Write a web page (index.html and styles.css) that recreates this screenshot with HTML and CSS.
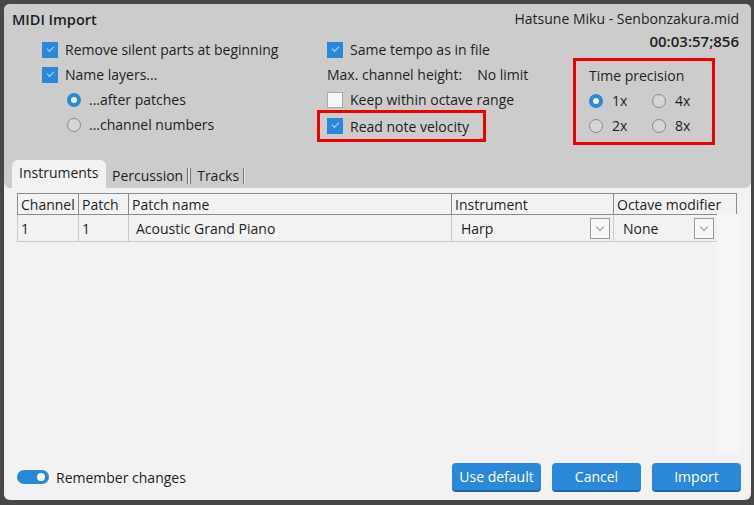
FILE: index.html
```html
<!DOCTYPE html>
<html lang="en">
<head>
    <meta charset="UTF-8">
    <title>MIDI Import</title>
    <link rel="stylesheet" href="styles.css">
</head>
<body>
    <div class="dialog">
        <div class="top">
            <div class="head">
                <div class="col-left">
                    <div class="title">MIDI Import</div>
                    <div class="options">
                        <div class="opt"><span class="check on"></span>Remove silent parts at beginning</div>
                        <div class="opt"><span class="check on"></span>Name layers...</div>
                        <div class="opt sub"><span class="radio on"></span>...after patches</div>
                        <div class="opt sub"><span class="radio"></span>...channel numbers</div>
                    </div>
                </div>
                <div class="col-mid">
                    <div class="opt"><span class="check on"></span>Same tempo as in file</div>
                    <div class="opt">Max. channel height:<span class="value">No limit</span></div>
                    <div class="opt"><span class="check"></span>Keep within octave range</div>
                    <div class="opt marked"><span class="check on"></span>Read note velocity</div>
                </div>
                <div class="col-right">
                    <div class="file">Hatsune Miku - Senbonzakura.mid</div>
                    <div class="time">00:03:57;856</div>
                    <div class="precision">
                        <div class="prec-title">Time precision</div>
                        <div class="prec-grid">
                            <div class="opt"><span class="radio on"></span>1x</div>
                            <div class="opt"><span class="radio"></span>4x</div>
                            <div class="opt"><span class="radio"></span>2x</div>
                            <div class="opt"><span class="radio"></span>8x</div>
                        </div>
                    </div>
                </div>
            </div>
            <div class="tabs">
                <span class="tab active">Instruments</span>
                <span class="tab sep-double">Percussion</span>
                <span class="tab sep-single">Tracks</span>
            </div>
        </div>

        <div class="panel">
            <div class="table-wrap">
                <table class="grid">
                    <colgroup>
                        <col class="c-channel">
                        <col class="c-patch">
                        <col class="c-name">
                        <col class="c-inst">
                        <col class="c-oct">
                    </colgroup>
                    <thead>
                        <tr>
                            <th>Channel</th>
                            <th>Patch</th>
                            <th>Patch name</th>
                            <th>Instrument</th>
                            <th>Octave modifier</th>
                        </tr>
                    </thead>
                    <tbody>
                        <tr>
                            <td>1</td>
                            <td>1</td>
                            <td class="name">Acoustic Grand Piano</td>
                            <td class="combo"><span>Harp</span><span class="drop"></span></td>
                            <td class="combo last"><span>None</span><span class="drop"></span></td>
                        </tr>
                    </tbody>
                </table>
                <div class="scroll-strip"></div>
            </div>

            <div class="footer">
                <div class="remember">
                    <span class="toggle"><span class="knob"></span></span>
                    Remember changes
                </div>
                <div class="buttons">
                    <button>Use default</button>
                    <button>Cancel</button>
                    <button>Import</button>
                </div>
            </div>
        </div>
    </div>
</body>
</html>
```

FILE: styles.css
```css
html, body {
    margin: 0;
    height: 100%;
}
body {
    background: #474747;
    padding: 4px 3px 5px 4px;
    box-sizing: border-box;
    font-family: 'Open Sans', 'Noto Sans', sans-serif;
    font-size: 14px;
    color: #1e1e1e;
}
.dialog {
    width: 747px;
    height: 496px;
    border-radius: 6px;
    overflow: hidden;
    background: #f2f2f2;
    display: flex;
    flex-direction: column;
    box-shadow: inset 1px 1px 0 #ececec;
}

/* upper grey area */
.top {
    background: #cccccc;
    border-radius: 0 0 6px 6px;
    padding: 4px 12px 0 8px;
    height: 184px;
    box-sizing: border-box;
    display: flex;
    flex-direction: column;
}
.head {
    display: flex;
}
.col-left { width: 305px; }
.col-mid {
    width: 256px;
    padding-top: 29px;
}
.col-right {
    width: 166px;
    display: flex;
    flex-direction: column;
    align-items: flex-end;
}
.title {
    font-size: 14.5px;
    font-weight: 600;
    height: 29px;
    line-height: 24px;
}
.options { padding-left: 30px; }
.opt {
    height: 25px;
    display: flex;
    align-items: center;
    white-space: nowrap;
}
.opt.sub { padding-left: 25px; }
.col-mid .opt { padding-left: 10px; }
.col-mid .opt.marked {
    border: 3px solid #f00000;
    height: 26px;
    margin: -2px 0 0;
    padding-left: 7px;
    width: 156px;
}
.value { margin-left: 15px; }

.check {
    width: 16px;
    height: 16px;
    box-sizing: border-box;
    margin-right: 7px;
    border: 1px solid #a8a8a8;
    background: #f7f7f7;
    flex: none;
    position: relative;
}
.check.on {
    background: #2b88d8;
    border-color: #2b88d8;
}
.check.on::after {
    content: "";
    position: absolute;
    left: 4px;
    top: 3px;
    width: 6px;
    height: 3px;
    border-left: 1px solid #b9d6f0;
    border-bottom: 1px solid #b9d6f0;
    transform: rotate(-45deg);
}
.radio {
    width: 14px;
    height: 14px;
    box-sizing: border-box;
    border-radius: 50%;
    border: 1px solid #8a8a8a;
    background: #d6d6d6;
    margin-right: 8px;
    flex: none;
}
.radio.on {
    border: 4px solid #2b88d8;
    background: #f4f4f4;
}

.file {
    line-height: 20px;
    margin-top: 1px;
    white-space: nowrap;
}
.time {
    font-size: 15px;
    font-weight: 600;
    line-height: 20px;
    margin-top: 2px;
    white-space: nowrap;
}
.precision {
    align-self: flex-start;
    margin-top: 7px;
    width: 142px;
    height: 87px;
    box-sizing: border-box;
    border: 3px solid #f00000;
    padding: 3px 0 0 13px;
}
.prec-title {
    line-height: 24px;
}
.prec-grid {
    display: grid;
    grid-template-columns: 63px 63px;
}
.prec-grid .opt { height: 25px; }
.prec-grid .radio { margin-right: 9px; }

/* tabs */
.tabs {
    margin-top: auto;
    display: flex;
    align-items: flex-end;
    height: 28px;
}
.tab {
    height: 24px;
    line-height: 24px;
    padding: 0 3px;
    display: inline-flex;
    align-items: center;
}
.tab.active {
    background: #f2f2f2;
    border-radius: 6px 6px 0 0;
    height: 28px;
    line-height: 26px;
    width: 94px;
    box-sizing: border-box;
    padding: 0 7px;
    align-items: flex-start;
    margin-right: 3px;
}
.tab.sep-double::after,
.tab.sep-single::after {
    content: "";
    display: inline-block;
    height: 16px;
    margin-left: 4px;
}
.tab.sep-double::after {
    width: 2px;
    border-left: 1px solid #6e6e6e;
    border-right: 1px solid #6e6e6e;
    background: #e4e4e4;
}
.tab.sep-single::after {
    width: 1px;
    border-right: 1px solid #e6e6e6;
    background: #777;
}

/* lower panel */
.panel {
    flex: 1;
    display: flex;
    flex-direction: column;
    padding: 5px 10px 8px 13px;
}
.table-wrap {
    flex: 1;
    position: relative;
}
.grid {
    border-collapse: collapse;
    table-layout: fixed;
    width: 719px;
}
.c-channel { width: 61px; }
.c-patch { width: 50px; }
.c-name { width: 323px; }
.c-inst { width: 162px; }
.c-oct { width: 123px; }
.grid th {
    text-align: left;
    font-weight: normal;
    height: 20px;
    padding: 0 3px;
    border: 1px solid #8c8c8c;
    background: #f3f3f3;
    white-space: nowrap;
    overflow: hidden;
}
.grid td {
    height: 26px;
    padding: 0 3px;
    border: 1px solid #cbcbcb;
    border-top: none;
    white-space: nowrap;
}
.grid td.name { padding-left: 7px; }
.grid td.combo {
    padding: 0 0 0 9px;
}
.grid td.combo span:first-child {
    float: left;
    line-height: 25px;
}
.grid td.combo .drop { margin-right: 3px; }
.grid td.last { border-right: none; }
.grid td.last .drop { margin-right: 23px; }
.drop {
    float: right;
    width: 20px;
    height: 21px;
    margin-top: 2px;
    box-sizing: border-box;
    border: 1px solid #9a9a9a;
    background: #f7f7f7;
    position: relative;
}
.drop::after {
    content: "";
    position: absolute;
    left: 6px;
    top: 5px;
    width: 5px;
    height: 5px;
    border-right: 1px solid #9a9a9a;
    border-bottom: 1px solid #9a9a9a;
    transform: rotate(45deg);
}
/* scrollbar track beside the rows */
.scroll-strip {
    position: absolute;
    left: 700px;
    top: 21px;
    width: 23px;
    bottom: 8px;
    background: #f6f6f6;
}

.footer {
    display: flex;
    align-items: center;
    justify-content: space-between;
    height: 30px;
}
.remember {
    display: flex;
    align-items: center;
}
.toggle {
    width: 32px;
    height: 14px;
    border-radius: 7px;
    background: #2b88d8;
    margin-right: 7px;
    position: relative;
}
.knob {
    position: absolute;
    right: 4px;
    top: 3px;
    width: 8px;
    height: 8px;
    border-radius: 50%;
    background: #fff;
}
.buttons {
    display: flex;
    gap: 11px;
}
button {
    width: 89px;
    height: 29px;
    border: none;
    border-radius: 4px;
    background: #2b88d8;
    border-bottom: 2px solid #1d66a8;
    color: #fff;
    font-family: 'Open Sans', 'Noto Sans', sans-serif;
    font-size: 14px;
    padding: 0;
}
```
